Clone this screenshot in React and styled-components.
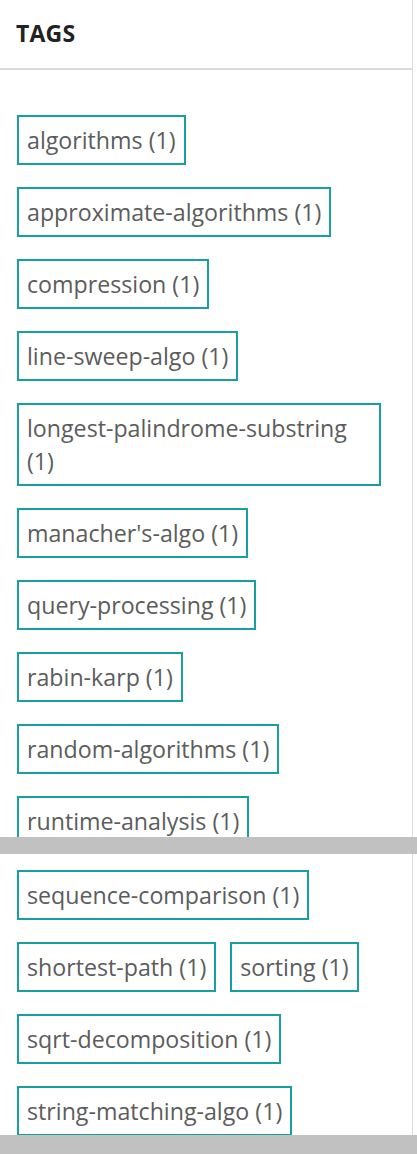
import styled, { createGlobalStyle } from "styled-components";

const firstTags = [
  "algorithms",
  "approximate-algorithms",
  "compression",
  "line-sweep-algo",
  "longest-palindrome-substring",
  "manacher's-algo",
  "query-processing",
  "rabin-karp",
  "random-algorithms",
  "runtime-analysis",
];

const secondTags = [
  "sequence-comparison",
  "shortest-path",
  "sorting",
  "sqrt-decomposition",
  "string-matching-algo",
];

const App = () => {
  return (
    <Page>
      <GlobalStyle />
      <Panel height={837}>
        <Header>TAGS</Header>
        <TagList top={45}>
          {firstTags.map((tag) => (
            <Tag key={tag}>{tag} (1)</Tag>
          ))}
        </TagList>
      </Panel>
      <ScrollBar size={17} />
      <Panel height={281}>
        <TagList top={16}>
          {secondTags.map((tag) => (
            <Tag key={tag}>{tag} (1)</Tag>
          ))}
        </TagList>
      </Panel>
      <ScrollBar size={19} />
    </Page>
  );
};

const GlobalStyle = createGlobalStyle`
  body {
    margin: 0;
    background: #fff;
    font-family: "Open Sans", "Noto Sans", sans-serif;
  }
`;

const Page = styled.div`
  width: 417px;
  display: flex;
  flex-direction: column;
`;

const Panel = styled.div`
  width: 412px;
  height: ${(p) => p.height}px;
  overflow: hidden;
  border-right: 1px solid #dcdcdc;
  background: #fff;
`;

const Header = styled.div`
  height: 70px;
  display: flex;
  align-items: center;
  padding-left: 16px;
  padding-bottom: 2px;
  box-sizing: border-box;
  border-bottom: 2px solid #dcdcdc;
  font-size: 23px;
  font-weight: 700;
  color: #222;
  letter-spacing: 0.2px;
`;

const TagList = styled.div`
  display: flex;
  flex-wrap: wrap;
  align-items: flex-start;
  gap: 22px 14px;
  width: 364px;
  padding: ${(p) => p.top}px 0 0 17px;
`;

const Tag = styled.span`
  display: inline-block;
  border: 2px solid #1a9fa1;
  padding: 6.8px 8px 5.8px;
  font-size: 23.2px;
  line-height: 33.4px;
  color: #5c5c5c;
  box-sizing: border-box;
  max-width: 364px;
`;

const ScrollBar = styled.div`
  width: 417px;
  height: ${(p) => p.size}px;
  background: #c1c1c1;
`;

export default App;
